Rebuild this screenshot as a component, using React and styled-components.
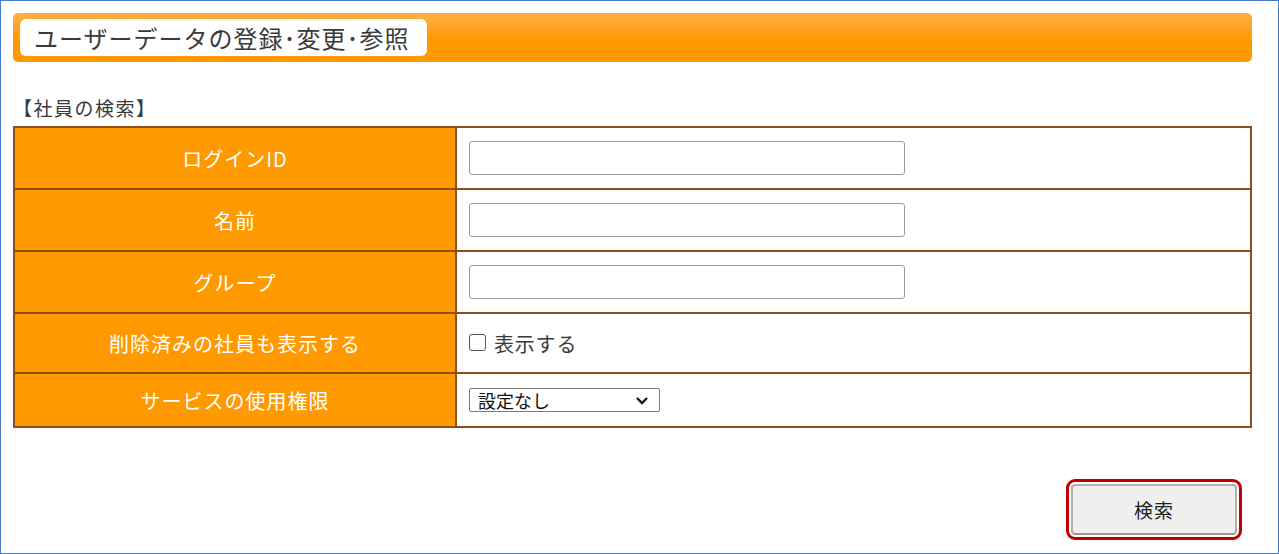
import React from 'react';
import styled, { createGlobalStyle } from 'styled-components';

const GlobalStyle = createGlobalStyle`
  html, body {
    margin: 0;
    padding: 0;
    background: #ffffff;
  }
  body {
    font-family: "Noto Sans CJK JP", "Noto Sans", sans-serif;
    color: #333333;
  }
`;

const fields = [
  { label: 'ログインID', kind: 'text', h: 60 },
  { label: '名前', kind: 'text', h: 62 },
  { label: 'グループ', kind: 'text', h: 62 },
  { label: '削除済みの社員も表示する', kind: 'check', h: 60 },
  { label: 'サービスの使用権限', kind: 'select', h: 54 },
];

const App = () => (
  <Page>
    <GlobalStyle />
    <TitleBar>
      <TitlePill>ユーザーデータの登録･変更･参照</TitlePill>
    </TitleBar>
    <SectionTitle>【社員の検索】</SectionTitle>
    <Form>
      {fields.map((f) => (
        <Row key={f.label} h={f.h}>
          <Label>{f.label}</Label>
          <Value>
            {f.kind === 'text' && <TextInput type="text" />}
            {f.kind === 'check' && (
              <CheckLabel>
                <Check type="checkbox" />
                表示する
              </CheckLabel>
            )}
            {f.kind === 'select' && (
              <SelectWrap>
                <Select defaultValue="none">
                  <option value="none">設定なし</option>
                </Select>
                <Chevron width="14" height="9" viewBox="0 0 14 9">
                  <path d="M2 2 L7 7 L12 2" fill="none" stroke="#111" strokeWidth="2.4" />
                </Chevron>
              </SelectWrap>
            )}
          </Value>
        </Row>
      ))}
    </Form>
    <Actions>
      <Highlight>
        <SearchButton type="button">検索</SearchButton>
      </Highlight>
    </Actions>
  </Page>
);

const Page = styled.div`
  width: 1279px;
  height: 554px;
  box-sizing: border-box;
  border: 1px solid #4a78c8;
  padding: 12px 26px 0 12px;
`;

const TitleBar = styled.div`
  height: 49px;
  box-sizing: border-box;
  padding: 6px 7px;
  border-radius: 5px;
  background: linear-gradient(to bottom, #ffb040 0%, #ffa326 30%, #ff9900 55%, #ff9900 100%);
`;

const TitlePill = styled.div`
  width: 407px;
  height: 37px;
  box-sizing: border-box;
  padding-left: 14px;
  border-radius: 6px;
  background: #ffffff;
  font-size: 24px;
  line-height: 37px;
  letter-spacing: 1px;
  color: #3a3a3a;
  white-space: nowrap;
`;

const SectionTitle = styled.div`
  margin: 34px 0 6px;
  font-size: 19px;
  line-height: 24px;
  letter-spacing: 1.5px;
  color: #3a3a3a;
`;

const Form = styled.div`
  border: 2px solid #8c4f22;
`;

const Row = styled.div`
  display: grid;
  grid-template-columns: 442px 1fr;
  height: ${(p) => p.h}px;
  box-sizing: border-box;
  & + & {
    border-top: 2px solid #8c4f22;
  }
`;

const Label = styled.div`
  display: flex;
  align-items: center;
  justify-content: center;
  background: #ff9900;
  border-right: 2px solid #8c4f22;
  color: #ffffff;
  font-size: 20px;
  letter-spacing: 1px;
`;

const Value = styled.div`
  display: flex;
  align-items: center;
  padding: 0 12px;
  background: #ffffff;
`;

const TextInput = styled.input`
  width: 436px;
  height: 34px;
  box-sizing: border-box;
  border: 1px solid #9a9a9a;
  border-radius: 3px;
  background: #ffffff;
  font-size: 16px;
`;

const CheckLabel = styled.label`
  display: flex;
  align-items: center;
  font-size: 20px;
  color: #3a3a3a;
  letter-spacing: 0.8px;
`;

const Check = styled.input`
  appearance: none;
  width: 17px;
  height: 17px;
  box-sizing: border-box;
  margin: 0 8px 2px 0;
  border: 1px solid #555555;
  border-radius: 3px;
  background: #ffffff;
`;

const SelectWrap = styled.div`
  position: relative;
  width: 191px;
  height: 24px;
`;

const Select = styled.select`
  appearance: none;
  width: 100%;
  height: 100%;
  box-sizing: border-box;
  padding: 0 0 0 8px;
  border: 1px solid #7a7a7a;
  border-radius: 2px;
  background: #ffffff;
  font-family: "Noto Sans CJK JP", sans-serif;
  font-size: 18px;
  line-height: 22px;
  color: #111111;
`;

const Chevron = styled.svg`
  position: absolute;
  right: 11px;
  top: 8px;
  pointer-events: none;
`;

const Actions = styled.div`
  display: flex;
  justify-content: flex-end;
  margin-top: 51px;
  padding-right: 10px;
`;

const Highlight = styled.div`
  border: 3px solid #c00000;
  border-radius: 9px;
  padding: 2px;
`;

const SearchButton = styled.button`
  width: 166px;
  height: 51px;
  border: 2px solid #b0b0b0;
  border-bottom-color: #9a9a9a;
  border-radius: 4px;
  background: #efefef;
  font-family: "Noto Sans CJK JP", sans-serif;
  font-size: 19px;
  letter-spacing: 1px;
  color: #222222;
`;

export default App;
